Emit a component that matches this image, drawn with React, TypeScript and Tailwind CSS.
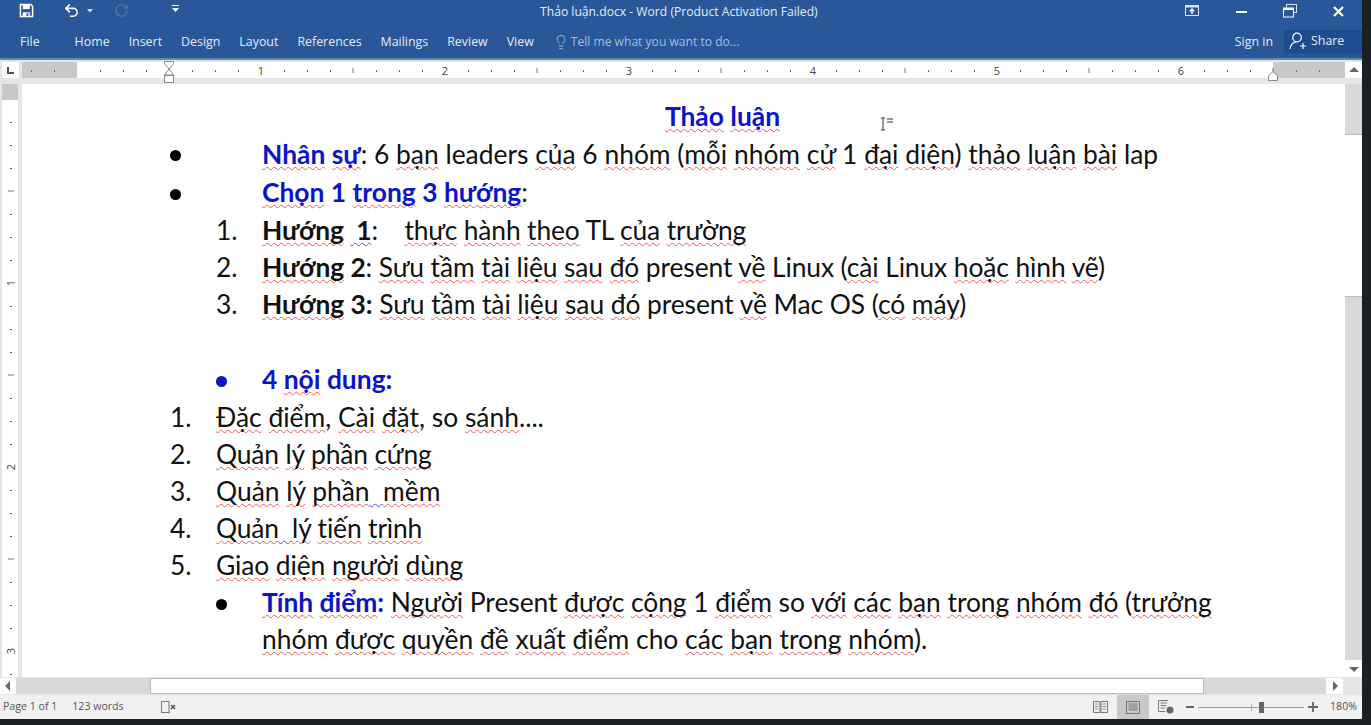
import type { ReactNode } from "react";
import { Lightbulb, Undo2, RotateCw } from "lucide-react";

const docFont = "font-['Lato','Noto_Sans',sans-serif] text-[26.4px] leading-[30px] text-[#111]";
const tabs = ["Home", "Insert", "Design", "Layout", "References", "Mailings", "Review", "View"];

// spell check squiggle
function R({ children }: { children: ReactNode }) {
  return <span className="underline decoration-wavy decoration-[#ee5a5a] decoration-1 underline-offset-[2px] [text-decoration-skip-ink:none]">{children}</span>;
}

// grammar squiggle
function G({ children }: { children: ReactNode }) {
  return <span className="underline decoration-wavy decoration-[#4a55d8] decoration-1 underline-offset-[2px] [text-decoration-skip-ink:none]">{children}</span>;
}

function Blue({ children }: { children: ReactNode }) {
  return <span className="font-bold text-[#0a14c8]">{children}</span>;
}

function Row({ h, marker, markerX, children }: { h: string; marker?: ReactNode; markerX?: string; children: ReactNode }) {
  return (
    <div className={`flex items-center whitespace-pre pb-[4px] ${h}`}>
      <div className={markerX}>{marker}</div>
      <div>{children}</div>
    </div>
  );
}

function Dot({ color = "bg-black" }: { color?: string }) {
  return <div className={`mt-[4px] h-[11px] w-[11px] rounded-full ${color}`} />;
}

function HRuler() {
  const ticks = [];
  for (let i = -2; i < 55; i++) {
    const x = 55 + i * 23;
    if (i % 8 === 0) continue;
    if (i % 4 === 0) ticks.push(<line key={i} x1={x} x2={x} y1={6} y2={11} stroke="#777" />);
    else ticks.push(<rect key={i} x={x} y={8} width={1} height={2} fill="#666" />);
  }
  return (
    <svg width="1323" height="16" className="block">
      <rect width="1323" height="16" fill="#fff" />
      <rect width="55" height="16" fill="#c8c8c8" />
      <rect x="1251" width="72" height="16" fill="#c8c8c8" />
      {ticks}
      {[1, 2, 3, 4, 5, 6].map((n) => (
        <text key={n} x={55 + n * 184} y={13} fontSize="11" fill="#444" textAnchor="middle" fontFamily="Open Sans">{n}</text>
      ))}
    </svg>
  );
}

function VRuler() {
  const ticks = [];
  for (let i = 1; i < 26; i++) {
    const y = 15 + i * 23;
    if (i % 8 === 0) continue;
    if (i % 4 === 0) ticks.push(<line key={i} x1={6} x2={12} y1={y} y2={y} stroke="#777" />);
    else ticks.push(<rect key={i} x={8} y={y} width={2} height={1} fill="#666" />);
  }
  return (
    <svg width="16" height="593" className="block">
      <rect width="16" height="593" fill="#fff" />
      <rect width="16" height="16" fill="#c8c8c8" />
      {ticks}
      {[1, 2, 3].map((n) => (
        <text key={n} x={0} y={0} fontSize="11" fill="#444" textAnchor="middle" fontFamily="Open Sans" transform={`translate(13 ${15 + n * 184}) rotate(-90)`}>{n}</text>
      ))}
    </svg>
  );
}

function ScrollTri({ dir }: { dir: "up" | "down" | "left" | "right" }) {
  const pts = { up: "0,7 10,7 5,2", down: "0,3 10,3 5,8", left: "7,0 7,10 2,5", right: "3,0 3,10 8,5" }[dir];
  return (
    <svg width="10" height="10" viewBox="0 0 10 10">
      <polygon points={pts} fill="#666" />
    </svg>
  );
}

export default function App() {
  return (
    <div className="flex h-[725px] w-[1371px] flex-col overflow-hidden bg-[#1c2022] font-['Open_Sans',sans-serif]">
      <div className="flex h-[719px] w-[1362px] flex-col bg-[#e6e6e6]">
        {/* title bar */}
        <div className="relative flex h-[30px] items-center bg-[#2a579a] text-white">
          <svg width="15" height="15" viewBox="0 0 16 16" className="ml-[19px] mb-[10px]">
            <path d="M1.5 1.5h11l2 2v11h-13z" fill="none" stroke="#fff" strokeWidth="1.6" />
            <rect x="4" y="1.5" width="7.5" height="5" fill="#fff" />
            <rect x="4" y="10" width="7.5" height="4.5" fill="#fff" />
            <rect x="8" y="11" width="2" height="3" fill="#2a579a" />
          </svg>
          <Undo2 size={17} strokeWidth={2.2} className="ml-[29px] mb-[10px]" />
          <svg width="6" height="4" className="ml-[7px] mb-[8px]"><polygon points="0,0 6,0 3,3.5" fill="#dbe4f2" /></svg>
          <RotateCw size={15} strokeWidth={2} className="ml-[21px] mb-[10px] text-[#4f76b0]" />
          <svg width="7" height="8" className="ml-[43px] mb-[12px]">
            <rect width="7" height="1" fill="#fff" />
            <polygon points="0,3 7,3 3.5,7" fill="#fff" />
          </svg>
          <div className="absolute left-[540px] top-[3px] text-[12.15px] text-[#e4ebf5]">Thảo luận.docx - Word (Product Activation Failed)</div>
          <div className="ml-auto flex items-center">
            <svg width="14" height="12" viewBox="0 0 14 12" className="mr-[37px] mb-[8px]">
              <rect x="0.5" y="0.5" width="13" height="10" fill="none" stroke="#dbe4f2" />
              <rect x="0.5" y="0.5" width="13" height="2" fill="#dbe4f2" />
              <path d="M7 9V4.5M4.8 6.5 7 4l2.2 2.5" fill="none" stroke="#fff" strokeWidth="1.3" />
            </svg>
            <div className="mr-[36px] mt-[-6px] h-[2px] w-[11px] bg-white" />
            <svg width="14" height="14" viewBox="0 0 14 14" className="mr-[36px] mb-[8px]">
              <rect x="3.5" y="0.5" width="10" height="8" fill="none" stroke="#dbe4f2" />
              <rect x="0.5" y="4" width="10" height="9" fill="#2a579a" stroke="#fff" />
              <rect x="0.5" y="4" width="10" height="2" fill="#fff" />
            </svg>
            <svg width="11" height="11" viewBox="0 0 11 11" className="mr-[18px] mb-[8px]">
              <path d="M1 1 10 10M10 1 1 10" stroke="#fff" strokeWidth="2.2" />
            </svg>
          </div>
        </div>

        {/* ribbon tabs */}
        <div className="flex h-[30px] items-start border-b-2 border-[#5e86bf] bg-[#2a579a] text-[12.4px] text-[#e4ebf5]">
          <div className="ml-[20px] mt-[3px]">File</div>
          <div className="ml-[35px] mt-[3px] flex gap-[19px]">
            {tabs.map((t) => (
              <div key={t}>{t}</div>
            ))}
          </div>
          <div className="ml-[19px] mt-[3px] flex items-center gap-[2px] text-[12.1px] text-[#a9bddb]">
            <Lightbulb size={16} strokeWidth={1.3} />
            <span>Tell me what you want to do...</span>
          </div>
          <div className="ml-auto mt-[3px]">Sign in</div>
          <div className="ml-[11px] -mt-px flex h-[24px] w-[78px] items-center bg-[#1f4b8f]">
            <svg width="18" height="18" viewBox="0 0 18 18" className="ml-[5px]">
              <circle cx="8" cy="5.5" r="4.3" fill="none" stroke="#fff" strokeWidth="1.2" />
              <path d="M1 17c.5-4 3-6.5 6-7M14 11v6M11 14h6" fill="none" stroke="#fff" strokeWidth="1.2" />
            </svg>
            <span className="ml-[4px]">Share</span>
          </div>
        </div>

        {/* horizontal ruler */}
        <div className="flex h-[24px] bg-[#e6e6e6] pt-[1px]">
          <div className="ml-[2px] mt-px flex h-[16px] w-[17px] items-center justify-center bg-white">
            <svg width="7" height="7"><path d="M1 0v6h6" fill="none" stroke="#555" strokeWidth="2" /></svg>
          </div>
          <div className="relative ml-[3px] mt-px">
            <HRuler />
            <svg width="12" height="23" viewBox="0 0 12 23" className="absolute left-[141px] top-[-1px]">
              <path d="M1.5 .5h9v2L6 8 1.5 2.5zM6 8l4.5 6h-9z" fill="#fff" stroke="#888" />
              <rect x="1.5" y="14.5" width="9" height="7" fill="#fff" stroke="#888" />
            </svg>
            <svg width="12" height="10" viewBox="0 0 12 10" className="absolute left-[1245px] top-[9px]">
              <path d="M6 .5 10.5 5v4.5h-9V5z" fill="#fff" stroke="#888" />
            </svg>
          </div>
          <div className="mt-px flex h-[16px] w-[17px] items-center justify-center bg-white">
            <ScrollTri dir="up" />
          </div>
        </div>

        <div className="flex h-[593px]">
          <div className="ml-[2px] w-[20px]">
            <VRuler />
          </div>

          {/* page */}
          <div className={`relative w-[1323px] overflow-hidden bg-white ${docFont}`}>
            <div className="flex h-[52px] items-center justify-center pl-[78px] pt-[12px]">
              <span className="font-bold text-[#0a14c8]"><R>Thảo</R> <R>luận</R></span>
            </div>
            <div className="absolute left-[859px] top-[33px]">
              <svg width="14" height="14" viewBox="0 0 14 14" className="block">
                <path d="M0 1h4M0 13h4M2 1v12M6 2h6M6 5h6" stroke="#333" strokeWidth="1" fill="none" />
              </svg>
            </div>
            <Row h="h-[39px]" marker={<Dot />} markerX="ml-[148px] w-[92px]">
              <Blue><R>Nhân</R> <R>sự</R></Blue>: 6 <R>bạn</R> leaders <R>của</R> 6 <R>nhóm</R> (<R>mỗi</R> <R>nhóm</R> <R>cử</R> 1 <R>đại</R> <R>diện</R>) <R>thảo</R> <R>luận</R> <R>bài</R> lap
            </Row>
            <Row h="h-[38px]" marker={<Dot />} markerX="ml-[148px] w-[92px]">
              <Blue><R>Chọn</R> 1 <R>trong</R> 3 <R>hướng</R></Blue>:
            </Row>
            <Row h="h-[37px] tracking-[-0.15px]" marker="1." markerX="ml-[194px] w-[46px]">
              <b><R>Hướng</R> <G> 1</G></b>:    <R>thực</R> <R>hành</R> <R>theo</R> TL <R>của</R> <R>trường</R>
            </Row>
            <Row h="h-[37px] tracking-[-0.1px]" marker="2." markerX="ml-[194px] w-[46px]">
              <b><R>Hướng</R> 2</b>: <R>Sưu</R> <R>tầm</R> <R>tài</R> <R>liệu</R> <R>sau</R> <R>đó</R> present <R>về</R> Linux (<R>cài</R> Linux <R>hoặc</R> <R>hình</R> <R>vẽ</R>)
            </Row>
            <Row h="h-[37px] tracking-[-0.07px]" marker="3." markerX="ml-[194px] w-[46px]">
              <b><R>Hướng</R> 3:</b> <R>Sưu</R> <R>tầm</R> <R>tài</R> <R>liệu</R> <R>sau</R> <R>đó</R> present <R>về</R> Mac OS (<R>có</R> <R>máy</R>)
            </Row>
            <div className="h-[38px]" />
            <Row h="h-[38px]" marker={<Dot color="bg-[#0a14c8]" />} markerX="ml-[194px] w-[46px]">
              <Blue>4 <R>nội</R> dung:</Blue>
            </Row>
            <Row h="h-[37px]" marker="1." markerX="ml-[148px] w-[46px]">
              <R>Đặc</R> <R>điểm</R>, <R>Cài</R> <R>đặt</R>, so <R>sánh</R>....
            </Row>
            <Row h="h-[37px] tracking-[-0.15px]" marker="2." markerX="ml-[148px] w-[46px]">
              <R>Quản</R> <R>lý</R> <R>phần</R> <R>cứng</R>
            </Row>
            <Row h="h-[37px]" marker="3." markerX="ml-[148px] w-[46px]">
              <R>Quản</R> <R>lý</R> <R>phần</R><G>  </G><R>mềm</R>
            </Row>
            <Row h="h-[37px] tracking-[-0.15px]" marker="4." markerX="ml-[148px] w-[46px]">
              <R>Quản</R><G>  </G><R>lý</R> <R>tiến</R> <R>trình</R>
            </Row>
            <Row h="h-[37px] tracking-[-0.1px]" marker="5." markerX="ml-[148px] w-[46px]">
              <R>Giao</R> <R>diện</R> <R>người</R> <R>dùng</R>
            </Row>
            <Row h="h-[38px] tracking-[-0.04px]" marker={<Dot />} markerX="ml-[194px] w-[46px]">
              <Blue><R>Tính</R> <R>điểm</R>:</Blue> <R>Người</R> Present <R>được</R> <R>cộng</R> 1 <R>điểm</R> so <R>với</R> <R>các</R> <R>bạn</R> <R>trong</R> <R>nhóm</R> <R>đó</R> (<R>trưởng</R>
            </Row>
            <Row h="h-[36px]" markerX="ml-[240px]">
              <R>nhóm</R> <R>được</R> <R>quyền</R> <R>đề</R> <R>xuất</R> <R>điểm</R> cho <R>các</R> <R>bạn</R> <R>trong</R> <R>nhóm</R>).
            </Row>
          </div>

          {/* vertical scrollbar */}
          <div className="flex w-[17px] flex-col bg-[#d9d9d9]">
            <div className="h-[50px]" />
            <div className="h-[163px] border-y border-[#bbb] bg-white" />
            <div className="flex-1" />
            <div className="flex h-[17px] items-center justify-center bg-white">
              <ScrollTri dir="down" />
            </div>
          </div>
        </div>

        {/* horizontal scrollbar */}
        <div className="flex h-[18px] items-stretch bg-[#e6e6e6] py-px">
          <div className="flex w-[16px] items-center justify-center bg-white">
            <ScrollTri dir="left" />
          </div>
          <div className="w-[134px] bg-[#d9d9d9]" />
          <div className="w-[1054px] border border-[#bbb] bg-white" />
          <div className="w-[122px] bg-[#d9d9d9]" />
          <div className="flex w-[17px] items-center justify-center bg-white">
            <ScrollTri dir="right" />
          </div>
        </div>

        {/* status bar */}
        <div className="flex h-[24px] items-center bg-[#f1f1f1] text-[10.6px] text-[#555]">
          <span className="ml-[3px]">Page 1 of 1</span>
          <span className="ml-[15px]">123 words</span>
          <svg width="16" height="13" viewBox="0 0 16 13" className="ml-[37px]">
            <path d="M8 .5H.5v11H8M8 .5v12" fill="none" stroke="#777" />
            <path d="M10 4l4 4M14 4l-4 4" stroke="#555" strokeWidth="1.5" />
          </svg>
          <div className="ml-auto flex h-full items-center">
            <svg width="15" height="13" viewBox="0 0 15 13">
              <path d="M.5 .5h6.5v11H.5zM8 .5h6.5v11H8z" fill="none" stroke="#777" />
              <path d="M2 3h3.5M2 5.5h3.5M2 8h3.5M9.5 3H13M9.5 5.5H13M9.5 8H13" stroke="#888" />
            </svg>
            <div className="ml-[9px] flex h-full w-[32px] items-center justify-center bg-[#c9c9c9]">
              <svg width="14" height="13" viewBox="0 0 14 13">
                <rect x=".5" y=".5" width="13" height="12" fill="none" stroke="#777" />
                <path d="M2.5 3h9M2.5 5h9M2.5 7h9M2.5 9h9" stroke="#777" />
              </svg>
            </div>
            <svg width="16" height="14" viewBox="0 0 16 14" className="ml-[9px]">
              <path d="M10 .5H.5v11h7" fill="none" stroke="#777" />
              <path d="M2.5 3H9M2.5 5.5H8M2.5 8H7" stroke="#777" />
              <circle cx="12" cy="10" r="3.5" fill="#666" />
            </svg>
            <div className="ml-[12px] h-[2px] w-[8px] bg-[#666]" />
            <div className="relative ml-[4px] h-px w-[106px] bg-[#999]">
              <div className="absolute left-[53px] top-[-3px] h-[7px] w-px bg-[#aaa]" />
              <div className="absolute left-[61px] top-[-5px] h-[11px] w-[5px] bg-[#666]" />
            </div>
            <svg width="10" height="10" viewBox="0 0 10 10" className="ml-[4px]">
              <path d="M5 0v10M0 5h10" stroke="#666" strokeWidth="1.8" />
            </svg>
            <span className="ml-[12px] mr-[5px]">180%</span>
          </div>
        </div>
      </div>
    </div>
  );
}
